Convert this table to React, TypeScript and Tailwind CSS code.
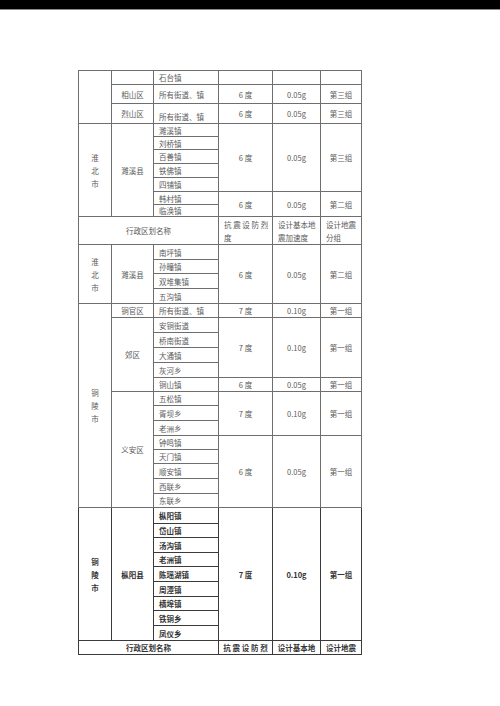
type Cell = { t?: string; rs?: number; cs?: number; left?: boolean; v?: boolean; cls?: string }
type Row = { h: string; cells: Cell[]; dark?: boolean }

const town = (t: string): Cell => ({ t, left: true })
const vals = (a: string, b: string, c: string, rs?: number): Cell[] => [
  { t: a, rs },
  { t: b, rs },
  { t: c, rs },
]

const rows: Row[] = [
  { h: "h-[14px]", cells: [{ rs: 3 }, {}, town("石台镇"), {}, {}, {}] },
  { h: "h-[19px]", cells: [{ t: "相山区" }, town("所有街道、镇"), ...vals("6 度", "0.05g", "第三组")] },
  {
    h: "h-[20px]",
    cells: [{ t: "烈山区" }, { t: "所有街道、镇", left: true, cls: "pt-[6px]" }, ...vals("6 度", "0.05g", "第三组")],
  },
  {
    h: "h-[13px]",
    cells: [{ t: "淮北市", rs: 7, v: true }, { t: "濉溪县", rs: 7 }, town("濉溪镇"), ...vals("6 度", "0.05g", "第三组", 5)],
  },
  { h: "h-[13px]", cells: [town("刘桥镇")] },
  { h: "h-[14px]", cells: [town("百善镇")] },
  { h: "h-[14px]", cells: [town("铁佛镇")] },
  { h: "h-[14px]", cells: [town("四铺镇")] },
  { h: "h-[13px]", cells: [town("韩村镇"), ...vals("6 度", "0.05g", "第二组", 2)] },
  { h: "h-[12px]", cells: [town("临涣镇")] },
  {
    h: "h-[28px]",
    cells: [
      { t: "行政区划名称", cs: 3 },
      { t: "抗 震 设 防 烈\n度", left: true },
      { t: "设计基本地\n震加速度", left: true },
      { t: "设计地震\n分组", left: true },
    ],
  },
  {
    h: "h-[15px]",
    cells: [{ t: "淮北市", rs: 4, v: true }, { t: "濉溪县", rs: 4 }, town("南坪镇"), ...vals("6 度", "0.05g", "第二组", 4)],
  },
  { h: "h-[14px]", cells: [town("孙疃镇")] },
  { h: "h-[15px]", cells: [town("双堆集镇")] },
  { h: "h-[15px]", cells: [town("五沟镇")] },
  {
    h: "h-[14px]",
    cells: [{ t: "铜陵市", rs: 14, v: true }, { t: "铜官区" }, town("所有街道、镇"), ...vals("7 度", "0.10g", "第一组")],
  },
  { h: "h-[15px]", cells: [{ t: "郊区", rs: 5 }, town("安铜街道"), ...vals("7 度", "0.10g", "第一组", 4)] },
  { h: "h-[15px]", cells: [town("桥南街道")] },
  { h: "h-[15px]", cells: [town("大通镇")] },
  { h: "h-[15px]", cells: [town("灰河乡")] },
  { h: "h-[14px]", cells: [town("铜山镇"), ...vals("6 度", "0.05g", "第一组")] },
  { h: "h-[14px]", cells: [{ t: "义安区", rs: 8 }, town("五松镇"), ...vals("7 度", "0.10g", "第一组", 3)] },
  { h: "h-[15px]", cells: [town("胥坝乡")] },
  { h: "h-[15px]", cells: [town("老洲乡")] },
  { h: "h-[14px]", cells: [town("钟鸣镇"), ...vals("6 度", "0.05g", "第一组", 5)] },
  { h: "h-[14px]", cells: [town("天门镇")] },
  { h: "h-[15px]", cells: [town("顺安镇")] },
  { h: "h-[15px]", cells: [town("西联乡")] },
  { h: "h-[14px]", cells: [town("东联乡")] },
  {
    h: "h-[16px]",
    dark: true,
    cells: [{ t: "铜陵市", rs: 9, v: true }, { t: "枞阳县", rs: 9 }, town("枞阳镇"), ...vals("7 度", "0.10g", "第一组", 9)],
  },
  { h: "h-[14px]", dark: true, cells: [town("岱山镇")] },
  { h: "h-[15px]", dark: true, cells: [town("汤沟镇")] },
  { h: "h-[14px]", dark: true, cells: [town("老洲镇")] },
  { h: "h-[15px]", dark: true, cells: [town("陈瑶湖镇")] },
  { h: "h-[15px]", dark: true, cells: [town("周潭镇")] },
  { h: "h-[14px]", dark: true, cells: [town("横埠镇")] },
  { h: "h-[15px]", dark: true, cells: [town("铁铜乡")] },
  { h: "h-[15px]", dark: true, cells: [town("凤仪乡")] },
  {
    h: "h-[14px]",
    dark: true,
    cells: [{ t: "行政区划名称", cs: 3 }, { t: "抗 震 设 防 烈" }, { t: "设计基本地" }, { t: "设计地震" }],
  },
]

function Content({ c }: { c: Cell }) {
  if (!c.t) return null
  if (c.v)
    return (
      <div className="flex flex-col items-center leading-[13px]">
        {c.t.split("").map((ch, i) => (
          <span key={i}>{ch}</span>
        ))}
      </div>
    )
  return (
    <div className={`whitespace-pre ${c.t.includes("\n") ? "leading-[13px]" : "leading-[9px]"}`}>{c.t}</div>
  )
}

export default function App() {
  return (
    <div className="min-h-[706px] w-[500px] bg-white font-['Noto_Sans_CJK_SC','Noto_Sans',sans-serif]">
      <div className="h-[9px] bg-black" />
      <div className="h-px bg-[#8a8a8a]" />
      <div className="pl-[78px] pt-[60px]">
        <table className="table-fixed border-collapse text-[7.5px]">
          <colgroup>
            <col className="w-[33px]" />
            <col className="w-[42px]" />
            <col className="w-[65px]" />
            <col className="w-[54px]" />
            <col className="w-[48px]" />
            <col className="w-[41px]" />
          </colgroup>
          <tbody>
            {rows.map((r, i) => (
              <tr key={i} className={r.h}>
                {r.cells.map((c, j) => (
                  <td
                    key={j}
                    rowSpan={c.rs}
                    colSpan={c.cs}
                    className={`p-0 align-middle ${c.left ? "pl-[5px] text-left" : "text-center"} ${
                      r.dark
                        ? "border border-[#3a3a3a] font-semibold text-[#333333]"
                        : "border border-[#6e6e6e] text-[#5a5a5a]"
                    } ${c.cls ?? ""}`}
                  >
                    <Content c={c} />
                  </td>
                ))}
              </tr>
            ))}
          </tbody>
        </table>
      </div>
    </div>
  )
}
